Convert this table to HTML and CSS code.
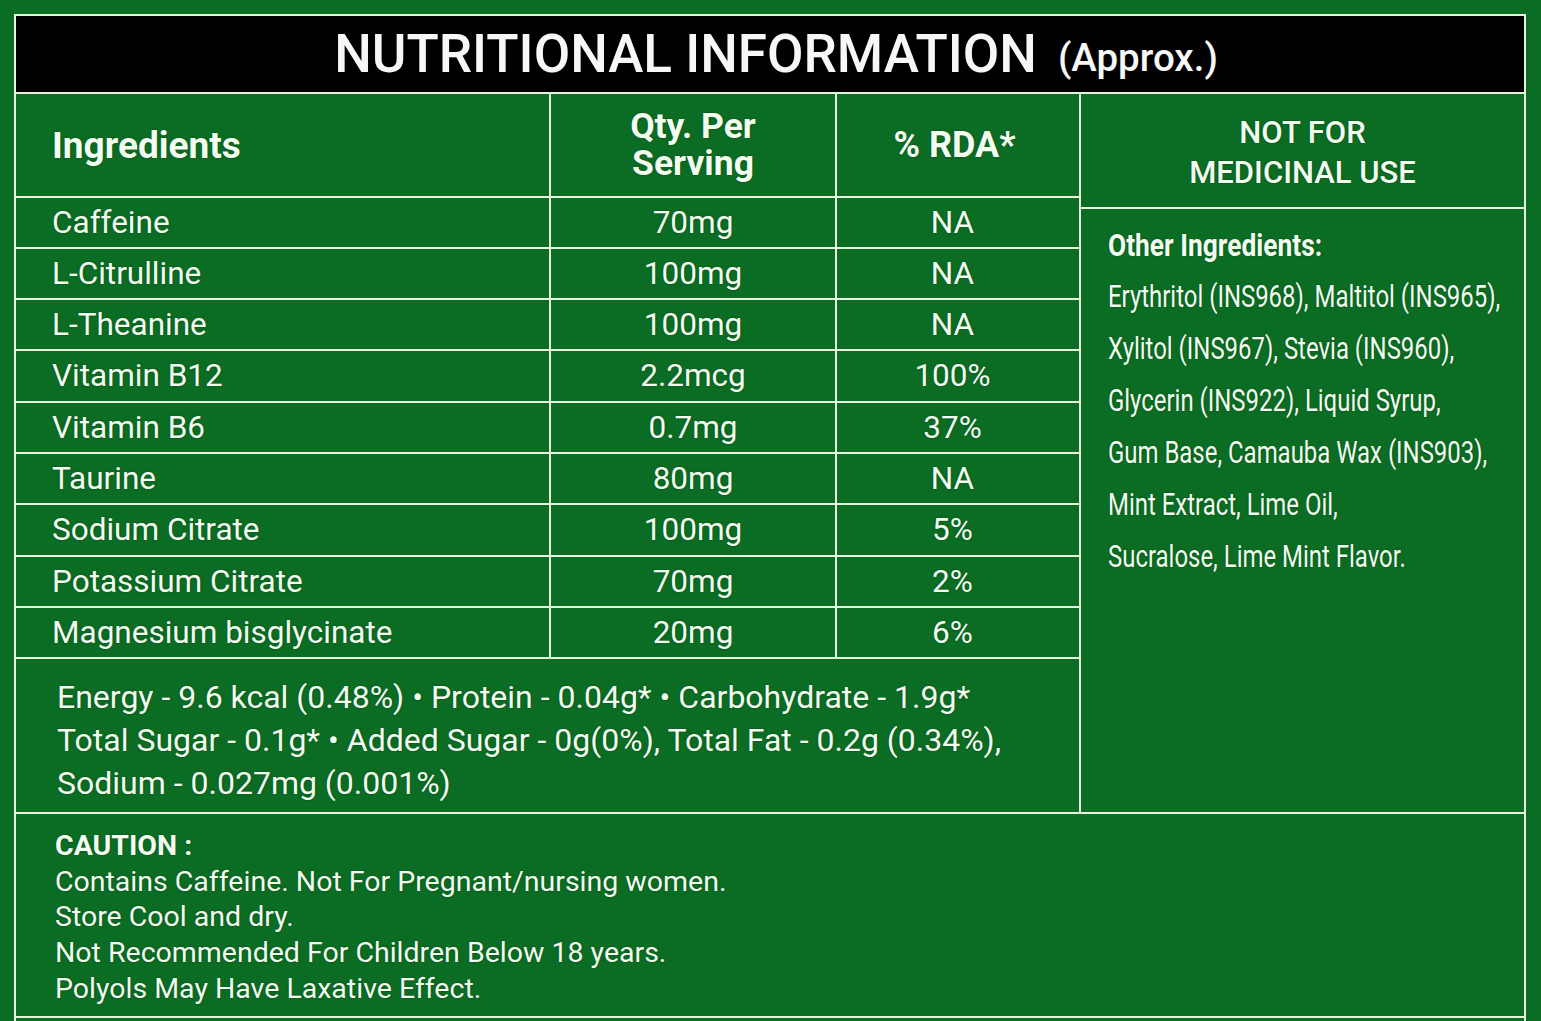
FILE: index.html
```html
<!DOCTYPE html>
<html lang="en">
<head>
<meta charset="utf-8">
<title>Nutritional Information</title>
<link rel="stylesheet" href="styles.css">
</head>
<body>
<div class="board">
  <div class="title"><span class="title-main">NUTRITIONAL INFORMATION</span><span class="title-sub">(Approx.)</span></div>
  <div class="main">
    <div class="left">
      <div class="table">
        <div class="cell head ing">Ingredients</div>
        <div class="cell head ctr qty"><span>Qty. Per</span><span>Serving</span></div>
        <div class="cell head ctr rda">% RDA*</div>

        <div class="cell ing">Caffeine</div><div class="cell ctr">70mg</div><div class="cell ctr rda">NA</div>
        <div class="cell ing">L-Citrulline</div><div class="cell ctr">100mg</div><div class="cell ctr rda">NA</div>
        <div class="cell ing">L-Theanine</div><div class="cell ctr">100mg</div><div class="cell ctr rda">NA</div>
        <div class="cell ing">Vitamin B12</div><div class="cell ctr">2.2mcg</div><div class="cell ctr rda">100%</div>
        <div class="cell ing">Vitamin B6</div><div class="cell ctr">0.7mg</div><div class="cell ctr rda">37%</div>
        <div class="cell ing">Taurine</div><div class="cell ctr">80mg</div><div class="cell ctr rda">NA</div>
        <div class="cell ing">Sodium Citrate</div><div class="cell ctr">100mg</div><div class="cell ctr rda">5%</div>
        <div class="cell ing">Potassium Citrate</div><div class="cell ctr">70mg</div><div class="cell ctr rda">2%</div>
        <div class="cell ing">Magnesium bisglycinate</div><div class="cell ctr">20mg</div><div class="cell ctr rda">6%</div>
      </div>
      <div class="summary">
        <p>Energy - 9.6 kcal (0.48%) • Protein - 0.04g* • Carbohydrate - 1.9g*</p>
        <p>Total Sugar - 0.1g* • Added Sugar - 0g(0%), Total Fat - 0.2g (0.34%),</p>
        <p>Sodium - 0.027mg (0.001%)</p>
      </div>
    </div>
    <div class="right">
      <div class="nfm"><div>NOT FOR<br>MEDICINAL USE</div></div>
      <div class="other">
        <p class="other-head"><span class="narrow">Other Ingredients:</span></p>
        <p><span class="narrow">Erythritol (INS968), Maltitol (INS965),</span></p>
        <p><span class="narrow">Xylitol (INS967), Stevia (INS960),</span></p>
        <p><span class="narrow">Glycerin (INS922), Liquid Syrup,</span></p>
        <p><span class="narrow">Gum Base, Camauba Wax (INS903),</span></p>
        <p><span class="narrow">Mint Extract, Lime Oil,</span></p>
        <p><span class="narrow">Sucralose, Lime Mint Flavor.</span></p>
      </div>
    </div>
  </div>
  <div class="caution">
    <p class="caution-head">CAUTION :</p>
    <p>Contains Caffeine. Not For Pregnant/nursing women.</p>
    <p>Store Cool and dry.</p>
    <p>Not Recommended For Children Below 18 years.</p>
    <p>Polyols May Have Laxative Effect.</p>
  </div>
  <div class="tail"></div>
</div>
</body>
</html>
```

FILE: styles.css
```css
* { box-sizing: border-box; }

html, body {
  margin: 0;
  padding: 0;
  background: #0b6c24;
  overflow: hidden;
}

body {
  font-family: Roboto, "Liberation Sans", sans-serif;
  color: #f3fcef;
  height: 1021px;
}

p { margin: 0; }

.board {
  margin: 14px 0 0 14px;
  width: 1512px;
  border: 2px solid #e4f4dd;
  border-bottom: none;
  background: #e4f4dd;
  display: flex;
  flex-direction: column;
  gap: 2px;
  text-shadow: 0 0 2px rgba(0, 40, 10, 0.45);
}

.title {
  height: 76px;
  background: #000;
  display: flex;
  align-items: center;
  justify-content: center;
  gap: 21px;
  padding-left: 12px;
  color: #f7f7f7;
}

.title-main {
  font-size: 53px;
  font-weight: 500;
}

.title-sub {
  font-size: 38.5px;
  font-weight: 500;
  padding-top: 6px;
}

.main {
  display: grid;
  grid-template-columns: 1063px 443px;
  gap: 2px;
}

.left {
  display: flex;
  flex-direction: column;
  gap: 2px;
  min-width: 0;
}

.table {
  display: grid;
  grid-template-columns: 533px 284px 242px;
  grid-template-rows: 102px 49px 49px 49px 50px 49px 49px 50px 49px 49px;
  gap: 2px;
}

.cell {
  background: #0b6c24;
  display: flex;
  align-items: center;
  font-size: 31.5px;
  line-height: 1;
}

.cell.ing { padding-left: 36px; }
.cell.ctr { justify-content: center; text-align: center; }
.cell.rda { padding-right: 11px; }

.cell.head {
  font-weight: 700;
  font-size: 36px;
}

.cell.qty {
  flex-direction: column;
  font-size: 35.5px;
  line-height: 37px;
}

.cell.qty span { display: block; height: 37px; }

.cell.head.ing { font-size: 37px; }
.cell.head.rda { padding-right: 7px; }

.summary {
  background: #0b6c24;
  height: 153px;
  padding: 17px 0 0 41px;
  font-size: 32px;
  line-height: 43px;
}

.right {
  display: grid;
  grid-template-columns: minmax(0, 1fr);
  grid-template-rows: 113px 1fr;
  gap: 2px;
  min-width: 0;
}

.nfm {
  background: #0b6c24;
  display: flex;
  align-items: center;
  justify-content: center;
  text-align: center;
  font-size: 31px;
  font-weight: 500;
  line-height: 40px;
  padding-top: 5px;
}

.other {
  background: #0b6c24;
  padding: 12px 0 0 27px;
  font-size: 31px;
  line-height: 52px;
  overflow: hidden;
}

.narrow {
  display: inline-block;
  white-space: nowrap;
  transform: scaleX(0.772);
  transform-origin: left center;
}

.other-head { font-weight: 700; line-height: 50px; }
.other-head .narrow { transform: scaleX(0.85); }

.caution {
  background: #0b6c24;
  height: 202px;
  padding: 14px 0 0 39px;
  font-size: 28.5px;
  line-height: 35.7px;
}

.caution-head { font-weight: 700; }

.tail {
  background: #0b6c24;
  height: 40px;
}
```
